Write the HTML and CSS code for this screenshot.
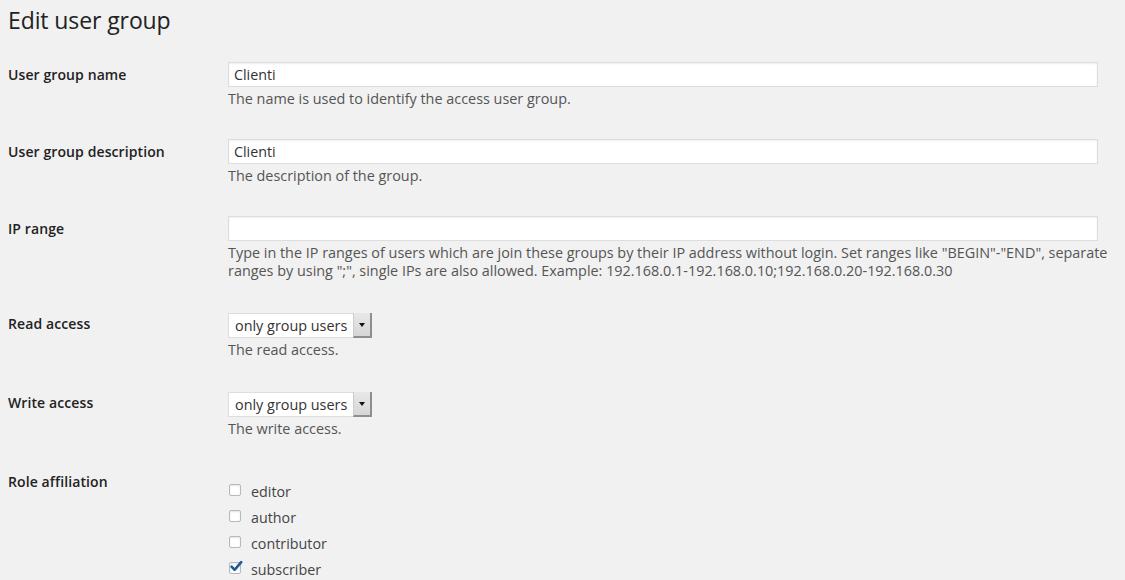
FILE: index.html
```html
<!DOCTYPE html>
<html>
<head>
<meta charset="utf-8">
<link rel="stylesheet" href="styles.css">
</head>
<body>
<div class="wrap">
  <h2 class="title">Edit user group</h2>
  <div class="form">
    <div class="row">
      <div class="label">User group name</div>
      <div class="field">
        <div class="input">Clienti</div>
        <div class="desc">The name is used to identify the access user group.</div>
      </div>
    </div>
    <div class="row">
      <div class="label">User group description</div>
      <div class="field">
        <div class="input">Clienti</div>
        <div class="desc">The description of the group.</div>
      </div>
    </div>
    <div class="row">
      <div class="label">IP range</div>
      <div class="field">
        <div class="input"></div>
        <div class="desc">Type in the IP ranges of users which are join these groups by their IP address without login. Set ranges like "BEGIN"-"END", separate ranges by using ";", single IPs are also allowed. Example: 192.168.0.1-192.168.0.10;192.168.0.20-192.168.0.30</div>
      </div>
    </div>
    <div class="row row-select">
      <div class="label">Read access</div>
      <div class="field">
        <div class="select"><span class="select-text">only group users</span><span class="select-btn"><span class="arrow"></span></span></div>
        <div class="desc">The read access.</div>
      </div>
    </div>
    <div class="row row-select">
      <div class="label">Write access</div>
      <div class="field">
        <div class="select"><span class="select-text">only group users</span><span class="select-btn"><span class="arrow"></span></span></div>
        <div class="desc">The write access.</div>
      </div>
    </div>
    <div class="row">
      <div class="label">Role affiliation</div>
      <div class="field">
        <ul class="checks">
          <li><span class="box"></span>editor</li>
          <li><span class="box"></span>author</li>
          <li><span class="box"></span>contributor</li>
          <li><span class="box checked"><svg viewBox="0 0 14 14" width="14" height="14"><path d="M2.6 6.6 L5.6 9.8 L12.2 2.2" fill="none" stroke="#1f5c94" stroke-width="2.6" stroke-linecap="round" stroke-linejoin="round"/></svg></span>subscriber</li>
        </ul>
      </div>
    </div>
  </div>
</div>
</body>
</html>
```
FILE: styles.css
```css
html, body {
  margin: 0;
  padding: 0;
  background: #f1f1f1;
}
body {
  font-family: "Open Sans", "Liberation Sans", sans-serif;
  font-size: 14px;
  color: #444;
}
.wrap {
  padding: 6px 8px 0 8px;
}
.title {
  margin: 0;
  font-size: 23px;
  font-weight: 400;
  line-height: 29px;
  color: #222;
  letter-spacing: -0.1px;
}
.form {
  margin-top: 12px;
}
.row {
  display: grid;
  grid-template-columns: 220px 1fr;
}
.label {
  padding-top: 19px;
  line-height: 18px;
  font-weight: 600;
  color: #222;
  letter-spacing: 0.1px;
}
.field {
  padding: 15px 0 16px 0;
}
.row-select .field {
  padding-top: 17px;
}
.input {
  width: 870px;
  height: 25px;
  box-sizing: border-box;
  background: #fff;
  border: 1px solid #ddd;
  box-shadow: inset 0 1px 2px rgba(0,0,0,0.07);
  padding: 0 5px;
  line-height: 23px;
  color: #333;
  font-size: 14.3px;
}
.desc {
  margin-top: 3px;
  line-height: 18px;
  color: #555;
  font-size: 14.4px;
  padding-right: 2px;
}
.select {
  display: inline-flex;
  height: 25px;
  box-sizing: border-box;
  border: 1px solid #ddd;
  background: #fff;
}
.select-text {
  padding: 0 6px 0 6px;
  line-height: 23px;
  color: #333;
  font-size: 14.4px;
}
.select-btn {
  width: 16px;
  background: linear-gradient(#e8e8e8, #d6d6d6);
  border-left: 1px solid #ccc;
  border-right: 2px solid #8e8e8e;
  border-bottom: 2px solid #8e8e8e;
  display: flex;
  align-items: center;
  justify-content: center;
  margin: -1px -1px -1px 0;
}
.arrow {
  width: 0;
  height: 0;
  border-left: 3px solid transparent;
  border-right: 3px solid transparent;
  border-top: 4px solid #111;
}
.checks {
  list-style: none;
  margin: 10px 0 0 0;
  padding: 0;
}
.checks li {
  display: flex;
  align-items: center;
  height: 26px;
  color: #444;
  line-height: 18px;
  font-size: 14.3px;
}
.box {
  align-self: flex-start;
  width: 12px;
  height: 12px;
  box-sizing: border-box;
  border: 1px solid #b4b9be;
  border-radius: 2px;
  background: #fff;
  margin: 5px 10px 0 1px;
  position: relative;
  box-shadow: inset 0 1px 2px rgba(0,0,0,0.1);
}
.box svg {
  position: absolute;
  left: -1px;
  top: -3px;
}
```
